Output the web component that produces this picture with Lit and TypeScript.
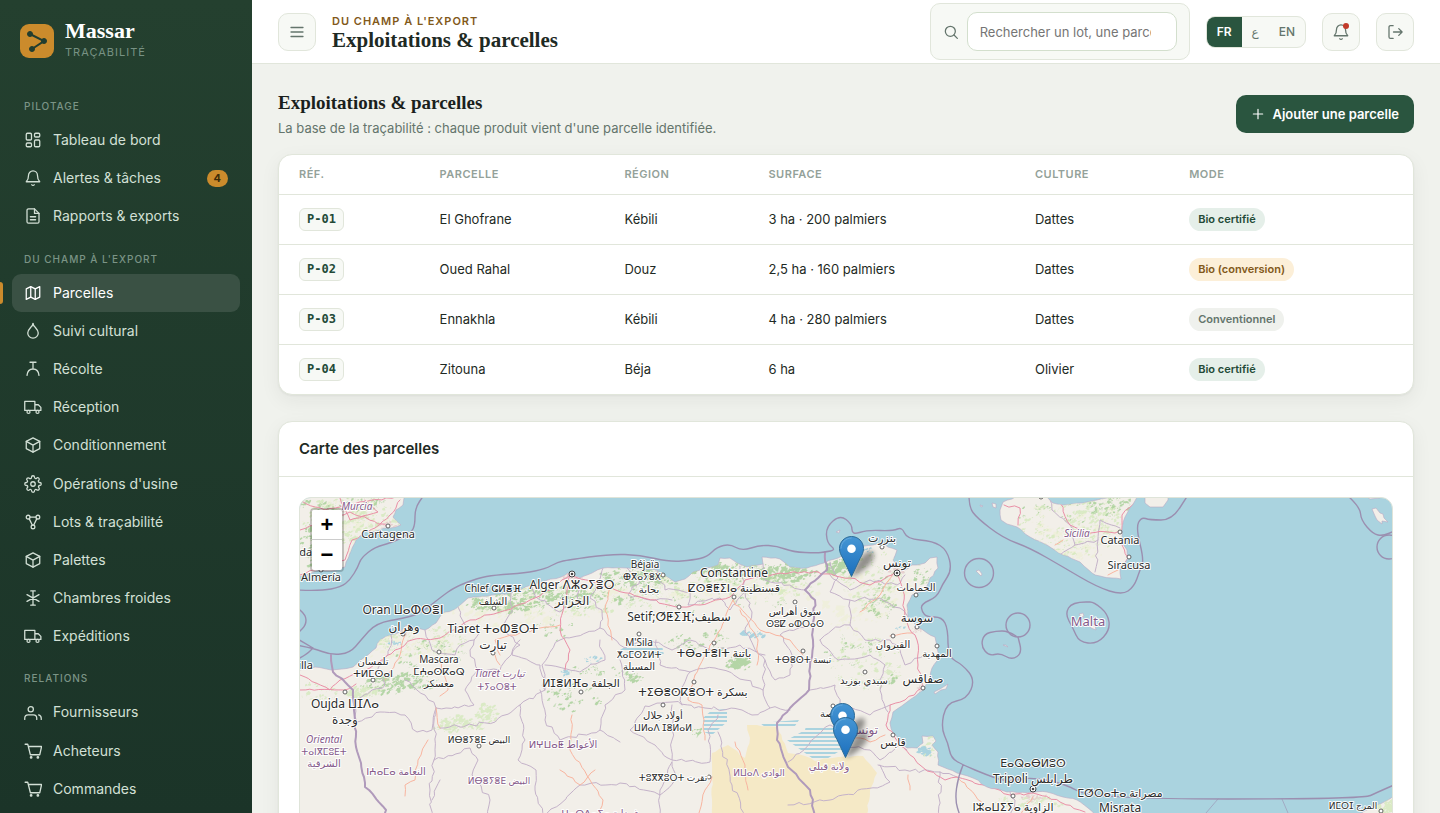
import { LitElement, html, css, svg } from "lit";
import { customElement, property, state } from "lit/decorators.js";
import { classMap } from "lit/directives/class-map.js";

const icons: Record<string, unknown> = {
  dashboard: svg`<rect x="3" y="3" width="7" height="9" rx="1.5"/><rect x="14" y="3" width="7" height="5" rx="1.5"/><rect x="14" y="12" width="7" height="9" rx="1.5"/><rect x="3" y="16" width="7" height="5" rx="1.5"/>`,
  bell: svg`<path d="M6 8.5a6 6 0 0 1 12 0c0 6 2.500 7.500 3 8.500H3c.5-1 3-2.500 3-8.500"/><path d="M10.300 21a2 2 0 0 0 3.400 0"/>`,
  file: svg`<path d="M14 2.500H6a2 2 0 0 0-2 2v15a2 2 0 0 0 2 2h12a2 2 0 0 0 2-2v-11z"/><path d="M14 2.500v6h6M8.500 13h7M8.500 17h7"/>`,
  map: svg`<path d="M3 6.500l6-3 6 3 6-3v14l-6 3-6-3-6 3z"/><path d="M9 3.500v14M15 6.500v14"/>`,
  drop: svg`<path d="M12 2.500c1 4 7 7 7 12a7 7 0 0 1-14 0c0-5 6-8 7-12z"/><path d="M12 2v3"/>`,
  harvest: svg`<path d="M8 3h8M12 3v9M4 20.500c.5-5 3.500-8.500 8-8.500s7.500 3.500 8 8.500"/>`,
  truck: svg`<path d="M1 4.500h13.500v12H1zM14.500 9h4.500l3.500 3.500v4h-8"/><circle cx="6" cy="18.500" r="2"/><circle cx="18" cy="18.500" r="2"/>`,
  box: svg`<path d="M12 2.500l9 4.700v9.600l-9 4.700-9-4.700V7.200z"/><path d="M3 7.200l9 5 9-5M12 12.200v9.300"/>`,
  gear: svg`<circle cx="12" cy="12" r="3"/><path d="M19.400 15a1.650 1.650 0 0 0 .33 1.820l.06.06a2 2 0 1 1-2.830 2.830l-.06-.06a1.650 1.650 0 0 0-2.800 1.180V21a2 2 0 1 1-4 0v-.09a1.650 1.650 0 0 0-2.820-1.170l-.06.06a2 2 0 1 1-2.830-2.830l.06-.06A1.650 1.650 0 0 0 3.170 14H3a2 2 0 1 1 0-4h.09a1.650 1.650 0 0 0 1.170-2.820l-.06-.06a2 2 0 1 1 2.830-2.830l.06.06A1.650 1.650 0 0 0 10 3.170V3a2 2 0 1 1 4 0v.09a1.650 1.650 0 0 0 2.820 1.170l.06-.06a2 2 0 1 1 2.830 2.830l-.06.06A1.650 1.650 0 0 0 20.910 10H21a2 2 0 1 1 0 4h-.09a1.650 1.650 0 0 0-1.510 1z"/>`,
  lots: svg`<circle cx="5.500" cy="5.500" r="2.500"/><circle cx="18.500" cy="5.500" r="2.500"/><circle cx="12" cy="18.500" r="2.500"/><path d="M8 5.500h8M7 7.800l4 8.300M17 7.800l-4 8.300"/>`,
  snow: svg`<path d="M12 2.500v19M4 7.500l16 9M20 7.500l-16 9M9 2.500h6M9 21.500h6"/>`,
  users: svg`<circle cx="9" cy="7" r="3.500"/><path d="M1 20.500v-1.500c0-3 2-4.500 4.500-4.500h7c2.500 0 4.500 1.500 4.500 4.500v1.500M19.500 14.500c2.200.6 3.500 2 3.500 4.500v1.500"/>`,
  cart: svg`<path d="M1.500 3H5l3.500 14h12.500l2.500-11H6"/><circle cx="9.500" cy="20.500" r="1"/><circle cx="18.500" cy="20.500" r="1"/>`,
  menu: svg`<path d="M4 6h16M4 12h16M4 18h16"/>`,
  search: svg`<circle cx="11" cy="11" r="7.500"/><path d="M16.500 16.500l5 5"/>`,
  logout: svg`<path d="M9.500 3.500H6a2 2 0 0 0-2 2v13a2 2 0 0 0 2 2h3.500M10 12h11.500M17 7.500l4.500 4.500-4.500 4.500"/>`,
  plus: svg`<path d="M12 4v16M4 12h16"/>`,
};

const icon = (name: string, cls = "icon") =>
  html`<svg class=${cls} viewBox="0 0 24 24" aria-hidden="true">${icons[name]}</svg>`;

@customElement("massar-sidebar")
class MassarSidebar extends LitElement {
  @property() current = "Parcelles";

  private groups = [
    { title: "PILOTAGE", items: [["dashboard", "Tableau de bord"], ["bell", "Alertes & tâches", "4"], ["file", "Rapports & exports"]] },
    {
      title: "DU CHAMP À L'EXPORT",
      items: [["map", "Parcelles"], ["drop", "Suivi cultural"], ["harvest", "Récolte"], ["truck", "Réception"], ["box", "Conditionnement"],
        ["gear", "Opérations d'usine"], ["lots", "Lots & traçabilité"], ["box", "Palettes"], ["snow", "Chambres froides"], ["truck", "Expéditions"]],
    },
    { title: "RELATIONS", items: [["users", "Fournisseurs"], ["cart", "Acheteurs"], ["cart", "Commandes"]] },
  ];

  static styles = css`
    :host { display: block; padding: 18px 12px 0; overflow: hidden; color: #d3e0d6;
      background: linear-gradient(#24402f, #1b3428); font-family: Inter, sans-serif; }
    .brand { display: flex; align-items: center; gap: 11px; padding: 0 8px; height: 46px; margin-bottom: 19px; }
    .logo { width: 34px; height: 34px; flex: none; }
    .name { font: bold 22px/24px "Liberation Serif", serif; color: #fff; }
    .tag { padding-bottom: 3px; font-size: 11px; line-height: 18px; letter-spacing: 1px; color: #789284; }
    .title { margin: 0; padding: 16px 12px 8px; font-size: 10px; line-height: 14px; font-weight: 500; letter-spacing: 1px; color: #7b9486; }
    .item { position: relative; display: flex; align-items: center; gap: 11px; padding: 10px 12px; border-radius: 9px;
      color: inherit; text-decoration: none; font-size: 14px; line-height: 1.3; }
    .item.on { background: #3a5144; color: #fff; }
    .item.on::before { content: ""; position: absolute; left: -12px; top: 8px; bottom: 8px; width: 3px; border-radius: 0 3px 3px 0; background: #cb8b2c; }
    .icon { width: 18px; height: 18px; flex: none; fill: none; stroke: currentColor; stroke-width: 1.7; stroke-linecap: round; stroke-linejoin: round; }
    .count { margin-left: auto; padding: 0 7px; border-radius: 9px; background: #cb8b2c; color: #3c2a08; font-size: 11px; line-height: 17px; font-weight: 700; }
  `;

  render() {
    return html`
      <div class="brand">
        <svg class="logo" viewBox="0 0 34 34" aria-hidden="true">
          <rect width="34" height="34" rx="9" fill="#cb8b2c"/>
          <g fill="#223d2f" stroke="#223d2f"><path d="M10 10l14 7-12 8" fill="none" stroke-width="2"/>
          <circle cx="10" cy="10" r="2.500"/><circle cx="24" cy="17" r="2.500"/><circle cx="12" cy="25" r="2.500"/></g>
        </svg>
        <div><div class="name">Massar</div><div class="tag">TRAÇABILITÉ</div></div>
      </div>
      <nav>
        ${this.groups.map((g) => html`
          <h2 class="title">${g.title}</h2>
          ${g.items.map(([ic, label, count]) => html`
            <a href="#" class=${classMap({ item: true, on: label === this.current })}>
              ${icon(ic)}<span>${label}</span>${count ? html`<span class="count">${count}</span>` : ""}
            </a>`)}`)}
      </nav>`;
  }
}

type Pt = [number, number];

/* Small deterministic generator, so that the map texture is stable between renders. */
const random = (seed: number) => () => {
  seed = (seed * 1664525 + 1013904223) % 4294967296;
  return seed / 4294967296;
};

const parse = (s: string): Pt[] => s.trim().split(/\s+/).map((p) => p.split(",").map(Number) as Pt);

/* Breaks every segment of a line into short, slightly displaced steps. */
const rough = (s: string, amount = 2, seed = 7): string => {
  const pts = parse(s);
  const rnd = random(seed + pts[0][0] * 31);
  let d = `M${pts[0]}`;
  for (let i = 1; i < pts.length; i++) {
    const [ax, ay] = pts[i - 1];
    const [bx, by] = pts[i];
    const steps = Math.max(1, Math.round(Math.hypot(bx - ax, by - ay) / 5));
    for (let k = 1; k <= steps; k++) {
      const t = k / steps;
      const a = k === steps ? 0 : amount;
      d += `L${(ax + (bx - ax) * t + (rnd() - 0.5) * a * 2).toFixed(1)} ${(ay + (by - ay) * t + (rnd() - 0.5) * a * 2).toFixed(1)}`;
    }
  }
  return d;
};

/* Rounded line through the points. */
const smooth = (s: string, close = false): string => {
  const p = parse(s);
  let d = `M${p[0]}`;
  for (let i = 1; i < p.length - 1; i++) {
    d += `Q${p[i]} ${(p[i][0] + p[i + 1][0]) / 2},${(p[i][1] + p[i + 1][1]) / 2}`;
  }
  return d + `L${p[p.length - 1]}` + (close ? "Z" : "");
};

/* Ragged patches gathered in small clusters over an ellipse: cx, cy, rx, ry, clusters, size. */
const patches = (areas: number[][], seed: number, grain = 1): string => {
  const rnd = random(seed);
  let d = "";
  for (const [cx, cy, rx, ry, n, size] of areas) {
    for (let i = 0; i < n; i++) {
      const a = rnd() * 6.283;
      const r = Math.sqrt(rnd());
      const x = cx + Math.cos(a) * r * rx;
      const y = cy + Math.sin(a) * r * ry;
      for (let j = 0; j < 4; j++) {
        const s = size * grain * (0.15 + rnd() * rnd());
        const px = x + (rnd() - 0.5) * size * 3.5;
        const py = y + (rnd() - 0.5) * size * 2;
        for (let k = 0; k < 6; k++) {
          const b = (k / 6) * 6.283;
          const q = s * (0.3 + rnd());
          d += `${k ? "L" : "M"}${(px + Math.cos(b) * q * 1.3).toFixed(1)} ${(py + Math.sin(b) * q * 0.9 - Math.cos(b) * q * 0.4).toFixed(1)}`;
        }
        d += "Z";
      }
    }
  }
  return d;
};

const AFRICA = rough("296,671 315,667 331,670 353,667 365,657 376,648 380,640 391,635 400,632 406,625 411,628 425,630 436,623 441,615 458,607 468,598 478,597 511,593 531,585 561,577 568,573 580,578 587,575 603,568 627,568 657,570 667,577 675,582 685,579 693,572 707,568 718,565 720,558 730,558 742,565 747,567 763,564 762,557 780,559 790,567 807,568 820,564 838,558 860,547 873,545 880,543 897,550 893,560 900,568 905,570 912,565 925,563 930,558 937,557 938,568 930,578 925,590 912,595 907,605 908,617 917,627 927,633 935,637 937,647 940,657 932,668 930,677 923,690 907,702 893,712 890,723 893,733 902,742 907,748 917,748 923,743 922,736 933,736 936,741 932,745 938,752 938,765 957,773 973,778 987,787 1007,792 1033,792 1047,792 1063,797 1077,800 1088,808 1096,816", 0.7) + "L1100 930L290 930Z";
const SPAIN = rough("296,490 404,490 403,505 396,510 393,517 401,525 388,528 365,532 356,540 350,553 345,567 331,571 320,570 311,573 296,578", 0.8) + "Z";
const SICILY = rough("1003,502 1012,499 1020,494 1044,494 1053,503 1063,505 1083,503 1107,498 1112,492 1140,492 1125,517 1122,530 1122,543 1127,550 1128,558 1120,568 1121,579 1112,578 1100,576 1092,573 1080,562 1063,555 1047,545 1030,537 1017,527 1007,524 1001,520 1000,510", 0.6) + "Z";
const ISLES = "M1145 490L1145 503L1150 507L1163 507L1168 500L1168 490ZM1372 509L1376 508L1380 513L1383 514L1384 518L1388 522L1382 521L1382 524L1377 520L1375 516ZM1362 494h18v4l-10 1zM976 571l3-1 3 4-1 2zM1079 614l4-1 1 3-3 1zM1087 622l8 3 1 5-5-2zM934 692l6-3 8-5-2 5-5 1-6 4zM1003 645l3 0 2 2zM836 532l4-2-1 3zM980 505l3 1-2 1zM992 503l4 1 0 4-3-1z" + rough("1396,796 1380,804 1363,812 1355,818 1355,830 1396,830", 0.5);
const LAND = AFRICA + SPAIN + SICILY + ISLES;

const GREEN = patches([
  [345, 503, 48, 8, 30, 2], [315, 545, 18, 22, 34, 2.5], [505, 605, 45, 6, 50, 2.5], [545, 592, 50, 8, 70, 2.5], [640, 578, 42, 9, 70, 2.5],
  [728, 573, 38, 9, 50, 2.5], [785, 573, 30, 8, 60, 3], [838, 567, 9, 7, 26, 3], [400, 684, 36, 9, 65, 2.5], [430, 655, 38, 14, 30, 1.5],
  [590, 598, 50, 12, 35, 2], [700, 642, 35, 12, 28, 2], [738, 662, 8, 5, 18, 3.5], [572, 698, 28, 14, 28, 2], [880, 608, 14, 9, 20, 2],
  [850, 650, 25, 15, 20, 1.5], [923, 572, 7, 12, 14, 2], [595, 670, 22, 5, 16, 1.5], [1110, 505, 22, 12, 35, 2], [1060, 513, 45, 10, 18, 1.2],
  [630, 675, 12, 6, 12, 2.5], [720, 600, 90, 12, 26, 1.5], [883, 592, 8, 16, 14, 1.6], [550, 630, 30, 12, 14, 1.5], [893, 680, 4, 3, 5, 2.5], [697, 732, 3, 3, 5, 2.5],
], 11);
const MEADOW = patches([
  [350, 520, 48, 22, 90, 2.5], [460, 725, 24, 7, 50, 2.5], [487, 714, 9, 9, 26, 2.5], [365, 692, 16, 6, 30, 2.5], [420, 640, 45, 16, 60, 2],
  [560, 600, 110, 16, 110, 2], [730, 588, 90, 14, 90, 2], [870, 580, 35, 28, 70, 2], [865, 665, 35, 28, 70, 2], [1065, 530, 55, 28, 90, 2],
  [1095, 520, 25, 20, 40, 2.5], [930, 750, 10, 12, 12, 2], [1030, 802, 40, 5, 36, 2], [1385, 807, 12, 8, 20, 3], [320, 690, 20, 10, 16, 2],
], 29);
const PALE = patches([[380, 650, 70, 14, 40, 4], [520, 612, 90, 12, 40, 4], [700, 590, 120, 14, 50, 4], [870, 600, 45, 50, 40, 4], [1075, 530, 50, 30, 40, 4], [350, 530, 45, 30, 40, 4]], 41);
const PONDS = patches([[745, 631, 6, 3, 3, 2.5], [757, 634, 3, 3, 3, 3.5], [595, 660, 9, 4, 5, 2], [565, 675, 6, 3, 3, 2.5], [395, 642, 9, 3, 6, 2], [870, 551, 5, 2, 4, 2], [900, 627, 3, 2, 3, 2], [898, 556, 4, 3, 4, 1.5], [926, 751, 4, 3, 8, 3.5]], 3);
const TOWNS = patches([[572, 577, 9, 3, 12, 2], [897, 571, 5, 4, 10, 2], [1033, 797, 12, 3, 10, 2], [388, 525, 8, 3, 8, 2], [404, 632, 5, 4, 6, 2], [922, 688, 3, 2, 4, 2], [1090, 624, 3, 3, 4, 1.5], [917, 629, 3, 4, 6, 1.5], [340, 512, 5, 4, 6, 1.5]], 5);

const BORDERS = [
  "331,655 333,672 345,682 353,690 355,720 356,747 361,763 365,787 386,810 384,822",
  "825,552 827,570 818,578 805,590 815,600 813,623 813,640 810,667 809,690 790,708 777,723 777,740 788,767 810,790 815,816",
].map((s) => rough(s, 1)).join("");

const MARITIME = [
  "296,590 321,591 341,587 350,580 358,567 361,558 375,547 391,543 411,533 415,525 415,508 424,495",
  "296,645 313,648 331,655 350,653 361,640 376,623 405,618 421,613 441,597 455,587 478,578 495,575 525,573 545,569 558,562 568,560 610,554 640,555 670,562 693,560 707,557 717,547 730,544 742,551 760,545 777,546 793,552 817,553 825,552 836,550 827,543 826,527 840,515 852,524 852,535 867,530 893,531 902,527 907,539 933,541 947,550 952,570 942,585 937,597 921,604 922,612 927,617 942,617 948,629 948,657 963,665 975,680 967,699 946,703 941,728 948,743 951,758 963,765 987,775 1007,782 1030,777 1063,783 1093,799 1363,799 1378,792 1394,785",
  "963,765 958,777 955,800 960,816",
  "969,495 969,507 977,518 1003,538 1030,548 1063,567 1097,587 1122,595 1134,587 1140,570 1144,560 1136,528 1141,517 1150,520 1172,520 1188,495",
  "1348,496 1360,507 1361,520 1373,534 1383,536 1394,531",
  "300,610 306,615 306,625 299,632", "296,660 306,655 313,648", "296,638 313,648",
  "1016,636 1008,631 996,631 984,634 981,646 989,656 1000,653 1012,660 1022,653 1018,637",
].map((s) => smooth(s)).join("") + smooth("1086,602 1072,602 1065,614 1073,628 1079,642 1097,644 1110,630 1108,614 1094,602 1086,602", true);

const PROVINCES = [
  "391,635 388,655 378,668 385,685 372,690 356,700 357,722", "357,722 380,712 405,715 417,732 432,730 436,708",
  "425,630 432,650 455,655 460,645 474,640", "458,607 465,625 480,632 470,650 478,670 465,690 474,705 436,708 425,695 405,680",
  "511,593 512,612 500,628 520,645 512,655 540,665 545,690 520,705 495,722 440,728", "436,708 434,760 430,790 432,816",
  "434,760 470,748 478,760 472,775 490,800 488,816", "520,705 525,740 518,760 536,770 535,790 545,816", "545,690 542,665 560,640 600,628 602,610 590,598 603,568",
  "540,690 545,720 560,740 600,730 620,742", "600,628 625,648 650,640 672,650 690,640 712,650 740,645 765,655",
  "545,665 580,672 605,660 600,640", "580,578 578,600 560,612 540,600 531,585", "627,568 640,580 628,595 650,600 672,600",
  "657,570 665,590 690,592 688,605 720,598 730,610 745,592 740,566", "763,564 765,580 790,585 805,590",
  "745,592 752,612 745,632 765,660 763,690 770,708 752,715 742,710 705,708 672,702 645,706 630,730 655,745 672,760",
  "620,660 625,690 605,705 600,730", "765,660 775,680 790,675 792,655 780,635 813,623", "770,708 790,710", "672,705 672,760 710,762 708,730 718,715",
  "672,762 660,790 660,816", "672,762 675,780 660,795 620,783 580,785 545,816", "718,732 732,785 745,816", "690,672 680,690 682,705",
  "830,575 850,590 870,580 897,585 905,575", "830,562 838,578 830,592 850,600 850,625 832,630 820,640", "850,600 880,598 900,608 908,617",
  "850,625 865,640 890,640 900,650 905,665 925,655", "820,640 838,660 870,655 885,665 880,690 888,712", "810,690 835,685 840,705 870,715 890,705",
  "845,745 870,750 880,760 900,745 907,750", "788,762 830,725 850,735", "878,765 905,770 940,772 957,777", "940,772 940,816", "788,805 830,800 890,782 880,765",
  "1046,494 1052,510 1070,525 1075,545 1060,555", "1075,545 1098,540 1100,520 1120,528", "1098,540 1095,572", "1010,816 1015,800 1010,792",
  "440,780 432,800", "520,640 500,670 478,670", "656,640 660,665 690,672 715,668 745,680 763,690",
].map((s) => rough(s, 1.8)).join("");

const MOTORWAYS = [
  "300,675 330,690 340,680 370,668 395,650 412,640 440,638 470,620 500,612 530,600 550,590 570,575 600,585 640,597 680,607 700,605 730,597 745,580 780,573 818,572",
  "570,575 565,600 560,630 570,650 565,670", "296,500 325,510 345,505 372,500 402,497", "300,530 330,520 350,512 388,527", "340,498 350,520 378,512 365,500",
  "300,575 320,568 345,560 352,540 375,528 390,515 400,500", "818,572 850,578 870,585 892,575 897,570", "897,570 903,590 905,620 917,640 918,665 922,688 905,700 890,705 886,725 900,745 920,765 945,780 957,777 985,785",
  "985,785 1010,795 1033,793 1060,802 1085,812", "1004,505 1020,508 1018,525", "1060,503 1070,525 1085,532 1115,533 1122,530 1122,515 1138,500", "1122,545 1128,558 1122,565", "300,690 345,690 356,684",
].map((s) => rough(s, 1.2)).join("");

const ROADS = [
  "405,635 400,655 385,680", "440,660 448,690 440,696", "500,655 495,640 540,628 560,625", "610,586 605,610 612,640", "733,600 725,620 710,645 695,675",
  "695,675 688,700 702,705 705,740", "733,600 760,630 790,640 803,655", "428,740 418,760 415,780 405,785 405,796", "572,715 570,750 590,780 603,800 600,816",
  "735,742 745,765 748,790", "712,777 705,790 698,816", "740,610 758,640 757,665", "892,575 880,595 860,612", "890,636 912,633", "850,735 870,742 885,735",
  "957,777 975,795 985,810", "908,775 910,790", "1033,797 1020,816", "1055,545 1063,540", "1108,575 1118,570", "560,770 580,785 595,770", "436,708 440,728", "495,655 500,665",
].map((s) => rough(s, 1.2)).join("");

const SAND = rough("747,725 777,727 788,753 805,756 815,761 838,757 863,756 877,773 870,790 865,830 712,830 712,753 728,745 745,758 750,738 747,725", 0.8) + "Z";
const SALT = ["M787 740L805 730L806 726L838 726L838 752L825 760L812 758Z", "M703 718L712 710L727 709L727 722L712 735L704 732Z", "M620 650L628 645L662 646L664 655L640 657Z", "M760 723L799 720L795 726L765 727Z", "M838 742L850 742L846 750L838 750Z"].join("");

/* Place names: x, baseline, size, text, kind (c: city, r: region). */
const LABELS: [number, number, number, string, string][] = [
  [357, 510, 10, "Murcia", "ri"], [388, 538, 11, "Cartagena", "c"], [290, 556, 11, "Granada", "c"], [321, 581, 11, "Almería", "c"],
  [403, 614, 12, "Oran ⵡⴰⵀⵔⴻⵏ", "c"], [404, 631, 12, "وهران", "c"], [296, 669, 11, "Melilla", "c"],
  [373, 665, 10, "تلمسان", "c"], [373, 677, 10, "ⵜⵍⵎⵙⴰⵏ", "c"], [345, 708, 12, "Oujda ⵡⵊⴷⴰ", "c"], [345, 724, 12, "وجدة", "c"],
  [324, 743, 10, "Oriental", "ri"], [324, 755, 9, "ⵜⴰⵏⴳⵎⵓⴹⵜ", "r"], [324, 767, 10, "الشرقية", "r"],
  [493, 592, 10, "Chlef ⵛⵍⴻⴼ", "c"], [493, 605, 10, "الشلف", "c"], [493, 633, 12, "Tiaret ⵜⴰⵀⴻⵔⵜ", "c"], [493, 649, 12, "تيارت", "c"],
  [439, 663, 10, "Mascara", "c"], [439, 675, 10, "ⵎⵄⴰⵙⴽⴰⵕ", "c"], [439, 687, 10, "معسكر", "c"],
  [500, 677, 10, "Tiaret تيارت", "ri"], [497, 690, 9, "ⵜⵢⴰⵔⴻⵜ", "r"], [479, 743, 9, "ⵍⴱⴻⵢⴻⴹ البيض", "c"], [396, 775, 10, "ⵏⵄⴰⵎⴰ النعامة", "r"], [499, 784, 9, "ⵍⴱⴻⵢⴻⴹ البيض", "r"],
  [572, 589, 12, "Alger ⴷⵣⴰⵢⴻⵔ", "c"], [572, 605, 12, "الجزائر", "c"], [581, 687, 11, "ⵍⵊⴻⵍⴼⴰ الجلفة", "c"], [563, 748, 10, "ⵍⵖⵡⴰⵟ الأغواط", "r"],
  [645, 568, 10, "Béjaïa", "c"], [642, 580, 9, "ⴲⴳⴰⵢⴻⵝ", "c"], [649, 593, 10, "بجاية", "c"],
  [734, 577, 12, "Constantine", "c"], [734, 592, 11, "ⵇⵙⴻⵟⵉⵏⴰ قسنطينة", "c"], [679, 621, 12, "Setif;ⵚⵟⵉⴼ;سطيف", "c"],
  [639, 646, 10, "M'Sila", "c"], [639, 658, 9, "ⵅⴰⵎⵙⵉⵍⵜ", "c"], [639, 670, 10, "المسيلة", "c"], [714, 657, 11, "ⵜⴱⴰⵜⴻⵏⵜ باتنة", "c"],
  [693, 696, 11, "ⵜⵉⴱⴻⵙⴽⴻⵔⵜ بسكرة", "c"], [663, 719, 10, "أولاد جلال", "c"], [663, 731, 9, "ⵡⵍⴰⴷ ⵊⴻⵍⴰⵍ", "c"],
  [795, 615, 10, "سوق أهراس", "c"], [795, 627, 9, "ⵙⵓⵇ ⴰⵀⵔⴰⵙ", "c"], [803, 663, 9, "ⵜⴱⴻⵙⵜ تبسة", "c"], [673, 781, 9, "ⵜⵓⴳⴳⵓⵔⵜ تقرت", "c"],
  [759, 776, 9, "ⵍⵡⴰⴷ الوادي", "r"], [829, 770, 10, "ولاية قبلي", "r"], [832, 717, 10, "قفصة", "c"], [864, 734, 12, "تونس", "r"],
  [600, 817, 10, "ⵖⴰⵔⴷⴰⵢⴰ غرداية", "r"], [882, 542, 11, "بنزرت", "c"], [897, 567, 12, "تونس", "c"], [916, 591, 10, "الحمامات", "c"],
  [917, 622, 12, "سوسة", "c"], [893, 648, 10, "القيروان", "c"], [937, 657, 10, "المهدية", "c"], [864, 684, 10, "سيدي بوزيد", "c"],
  [923, 683, 12, "صفاقس", "c"], [893, 746, 11, "قابس", "c"], [1077, 537, 10, "Sicilia", "ri"], [1120, 544, 11, "Catania", "c"], [1129, 569, 11, "Siracusa", "c"],
  [1088, 626, 13, "Malta", "r"], [1033, 767, 11, "ⴹⴰⵕⴰⴱⵍⵓⵙ", "c"], [1033, 783, 12, "Tripoli طرابلس", "c"], [1013, 811, 11, "ⵏⵣⴰⵡⵉⵢⴰ الزاوية", "c"],
  [1120, 797, 11, "ⵎⵚⵔⴰⵜⴰ مصراتة", "c"], [1120, 812, 12, "Misrata", "c"], [1353, 809, 9, "ⵍⵎⵔⵊ المرج", "c"],
];

const CITIES: Pt[] = [[388, 526], [321, 570], [403, 634], [345, 692], [373, 680], [439, 652], [494, 608], [493, 653], [479, 746], [581, 692], [663, 575], [734, 597], [679, 607], [639, 634], [714, 643], [694, 682], [663, 705], [795, 602], [803, 651], [709, 777], [833, 706], [916, 595], [917, 627], [893, 636], [937, 646], [865, 672], [923, 688], [893, 735], [1120, 532], [1129, 557], [1013, 796], [1381, 811], [882, 547], [1041, 497]];
const CAPITALS: Pt[] = [[572, 574], [897, 573], [1033, 789]];
const PINS: Pt[] = [[851, 577], [842, 744], [845, 758]];

@customElement("parcel-map")
class ParcelMap extends LitElement {
  static styles = css`
    :host { display: block; position: relative; height: 420px; border: 1px solid #dfe4d9; border-radius: 12px; overflow: hidden; background: #aad3df; }
    .map { display: block; width: 100%; height: 100%; }
    .line { fill: none; stroke-linejoin: round; stroke-linecap: round; }
    .place { font-family: "Noto Sans", "DejaVu Sans", sans-serif; text-anchor: middle; paint-order: stroke; stroke: #fffffff0; stroke-width: 2px; stroke-linejoin: round; fill: #2c2c2c; }
    .r, .ri { fill: #855a8a; }
    .ri { font-style: italic; }
    .zoom { position: absolute; left: 10px; top: 10px; display: grid; border: 2px solid #0003; border-radius: 4px; background-clip: padding-box; }
    .zoom button { width: 30px; height: 30px; padding: 0; border: 0; background: #fff; color: #000; font: bold 22px/30px "Liberation Sans", sans-serif; }
    .zoom button:first-child { border-bottom: 1px solid #ccc; border-radius: 2px 2px 0 0; }
    .zoom button:last-child { border-radius: 0 0 2px 2px; }
  `;

  render() {
    return html`
      <svg class="map" viewBox="300 498 1092 420" preserveAspectRatio="xMidYMin slice" role="img" aria-label="Carte des parcelles">
        <defs>
          <clipPath id="land"><path d=${LAND}/></clipPath>
          <pattern id="salt" width="8" height="4" patternUnits="userSpaceOnUse"><rect width="8" height="2" fill="#aad3df"/></pattern>
          <linearGradient id="pin" x1="0" y1="0" x2="0" y2="1"><stop offset="0" stop-color="#4596d4"/><stop offset="1" stop-color="#1c6fbd"/></linearGradient>
          <filter id="soft" x="-40%" y="-40%" width="180%" height="180%"><feGaussianBlur stdDeviation="2.500"/></filter>
        </defs>
        <path d=${LAND} fill="#f2efe9" stroke="#b9a9c4" stroke-width="0.6"/>
        <g clip-path="url(#land)">
          <path d=${SAND} fill="#f5e9c6"/>
          <path d=${PALE} fill="#eef0d5" opacity="0.7"/>
          <path d=${MEADOW} fill="#d3e8bb" opacity="0.8"/>
          <path d=${GREEN} fill="#add19e" opacity="0.9"/>
          <path d=${TOWNS} fill="#e6cfcf"/>
          <path d=${PONDS} fill="#aad3df"/>
          <path d=${SALT} fill="url(#salt)"/>
          <path class="line" d=${PROVINCES} stroke="#c4b2c9"/>
          <path class="line" d=${ROADS} stroke="#f8b5a0"/>
          <path class="line" d=${MOTORWAYS} stroke="#e98fa6"/>
        </g>
        <path class="line" d="M1218 799L1206 813M1282 799L1288 813" stroke="#9b8fb0" stroke-width="0.6"/>
        <path class="line" d=${BORDERS} stroke="#b09abb" stroke-width="2"/>
        <g class="line" stroke="#9b8fb0" stroke-width="1.4">
          <path d=${MARITIME}/><circle cx="979" cy="573" r="14.500"/><circle cx="1018" cy="625" r="12"/><circle cx="1389" cy="547" r="12"/>
        </g>
        <g fill="#fff" stroke="#555" stroke-width="0.9">${CITIES.map(([x, y]) => svg`<circle cx=${x} cy=${y} r="2"/>`)}</g>
        ${CAPITALS.map(([x, y]) => svg`<circle cx=${x} cy=${y} r="3" fill="#fff" stroke="#444"/><circle cx=${x} cy=${y} r="1.300" fill="#444"/>`)}
        ${LABELS.map(([x, y, size, text, kind]) => svg`<text class="place ${kind}" x=${x} y=${y} font-size=${size}>${text}</text>`)}
        ${PINS.map(([x, y]) => svg`<path d="M${x} ${y}c4-12 10-24 19-26 6-1 5 8-1 14-6 6-12 10-18 12z" fill="#000" opacity="0.4" filter="url(#soft)"/>`)}
        ${PINS.map(([x, y]) => svg`<g transform="translate(${x - 12} ${y - 41})">
          <path d="M12.500.5C5.800.5.500 5.800.500 12.500c0 4 1.500 6.500 3.500 10L12.500 40.500 21 22.500c2-3.500 3.500-6 3.500-10C24.500 5.800 19.200.5 12.500.5z" fill="url(#pin)" stroke="#2e6c97"/>
          <path d="M12.500 2C6.700 2 2 6.700 2 12.500" fill="none" stroke="#7db8e2" stroke-opacity="0.6"/><circle cx="12.500" cy="12.800" r="4.300" fill="#fff"/></g>`)}
      </svg>
      <div class="zoom"><button aria-label="Zoom avant">+</button><button aria-label="Zoom arrière">−</button></div>`;
  }
}

@customElement("app-root")
class AppRoot extends LitElement {
  @state() private lang = "FR";

  private rows = [
    ["P-01", "El Ghofrane", "Kébili", "3 ha · 200 palmiers", "Dattes", "Bio certifié", "ok"],
    ["P-02", "Oued Rahal", "Douz", "2,5 ha · 160 palmiers", "Dattes", "Bio (conversion)", "warn"],
    ["P-03", "Ennakhla", "Kébili", "4 ha · 280 palmiers", "Dattes", "Conventionnel", "plain"],
    ["P-04", "Zitouna", "Béja", "6 ha", "Olivier", "Bio certifié", "ok"],
  ];

  static styles = css`
    :host { display: grid; grid-template-columns: 252px minmax(0, 1fr); height: 100vh; overflow: hidden;
      font-family: Inter, "DejaVu Sans", sans-serif; color: #1e2a24; background: #f0f2ed; }
    * { box-sizing: border-box; }
    button { font-family: inherit; margin: 0; }
    .page { display: flex; flex-direction: column; min-width: 0; min-height: 0; }
    .top { display: flex; align-items: center; gap: 16px; height: 64px; flex: none; padding: 0 26px; background: #fff; border-bottom: 1px solid #e1e6db; }
    .heading { margin-right: auto; }
    .crumb { font-size: 11px; line-height: 16px; font-weight: 600; letter-spacing: 1px; color: #82591a; }
    h1 { margin: 0; font: bold 21px/22px "Liberation Serif", serif; }
    .icon { width: 18px; height: 18px; fill: none; stroke: currentColor; stroke-width: 1.7; stroke-linecap: round; stroke-linejoin: round; }
    .small { width: 16px; height: 16px; flex: none; fill: none; stroke: currentColor; stroke-width: 1.9; stroke-linecap: round; }
    .plus { width: 14px; height: 14px; flex: none; fill: none; stroke: currentColor; stroke-width: 2; stroke-linecap: round; }
    .square { position: relative; display: grid; place-items: center; width: 38px; height: 38px; padding: 0; border: 1px solid #e1e6db; border-radius: 10px; background: #f7f9f5; color: #64756c; }
    .dot { position: absolute; top: 9px; right: 10px; width: 6px; height: 6px; border-radius: 50%; background: #c23b2a; }
    .search { display: flex; align-items: center; gap: 8px; width: 260px; padding: 8px 12px; border: 1px solid #e1e6db; border-radius: 10px; background: #f7f9f5; color: #64756c; }
    .search input { flex: 1; min-width: 0; height: 39px; padding: 0 12px; border: 1px solid #d3dfcd; border-radius: 10px; background: #fff; font: 13px Inter, sans-serif; }
    .search input::placeholder { color: #757575; }
    .langs { display: flex; height: 32px; border: 1px solid #e1e6db; border-radius: 9px; background: #f7f9f5; overflow: hidden; }
    .langs button { padding: 0 10px; border: 0; background: none; color: #64756c; font-size: 12px; font-weight: 500; }
    .langs .on { background: #2a553f; color: #fff; font-weight: 600; }
    main { display: flex; flex-direction: column; padding: 26px; overflow: auto; scrollbar-width: none; flex: 1; min-height: 0; }
    .intro { display: flex; align-items: center; justify-content: space-between; margin-bottom: 16px; }
    h2 { margin: 0 0 2px; font: bold 19px/26px "Liberation Serif", serif; color: #1a1f1c; }
    .lead { margin: 0; font-size: 13px; line-height: 20px; color: #64756c; }
    .add { display: flex; align-items: center; gap: 7px; height: 38px; padding: 0 15px; border: 0; border-radius: 10px; background: #2a553f; color: #fff; font-size: 13px; font-weight: 600; }
    .card { flex: none; border: 1px solid #e1e6db; border-radius: 14px; background: #fff; box-shadow: 0 1px 2px #1e2a240d, 0 6px 20px #1e2a240f; overflow: hidden; margin-bottom: 26px; }
    table { width: 100%; table-layout: fixed; border-collapse: collapse; }
    th { height: 39px; padding: 0 20px; border-bottom: 1px solid #e1e6db; text-align: left; font-size: 11px; font-weight: 600; letter-spacing: 0.5px; color: #93a199; }
    td { height: 50px; padding: 0 20px; font-size: 13px; line-height: 20px; white-space: nowrap; }
    tr + tr td { border-top: 1px solid #e1e6db; }
    .c1 { width: 12.4%; } .c2 { width: 16.3%; } .c3 { width: 12.7%; } .c4 { width: 23.5%; } .c5 { width: 13.6%; }
    .ref { display: inline-block; padding: 0 7px; border: 1px solid #e1e6db; border-radius: 6px; background: #f7f9f5; color: #234a37; font: bold 12px/21px "DejaVu Sans Mono", monospace; }
    .pill { display: inline-block; padding: 0 9px; border-radius: 12px; font-size: 11px; line-height: 23px; font-weight: 600; }
    .ok { background: #e5efe9; color: #234a37; }
    .warn { background: #fcefd8; color: #82591a; }
    .plain { background: #eff1ed; color: #64756c; }
    h3 { margin: 0; padding: 16px 20px; border-bottom: 1px solid #e1e6db; font-size: 15px; line-height: 22px; font-weight: 600; }
    .body { padding: 20px; }
  `;

  render() {
    return html`
      <massar-sidebar></massar-sidebar>
      <div class="page">
        <header class="top">
          <button class="square" aria-label="Menu">${icon("menu")}</button>
          <div class="heading"><div class="crumb">DU CHAMP À L'EXPORT</div><h1>Exploitations &amp; parcelles</h1></div>
          <label class="search">${icon("search", "small")}<input type="search" aria-label="Rechercher" placeholder="Rechercher un lot, une parcelle…"></label>
          <div class="langs">
            ${["FR", "ع", "EN"].map((l) => html`<button class=${classMap({ on: l === this.lang })} @click=${() => (this.lang = l)}>${l}</button>`)}
          </div>
          <button class="square" aria-label="Notifications">${icon("bell")}<span class="dot"></span></button>
          <button class="square" aria-label="Déconnexion">${icon("logout")}</button>
        </header>
        <main>
          <div class="intro">
            <div><h2>Exploitations &amp; parcelles</h2><p class="lead">La base de la traçabilité : chaque produit vient d'une parcelle identifiée.</p></div>
            <button class="add">${icon("plus", "plus")}Ajouter une parcelle</button>
          </div>
          <section class="card">
            <table>
              <thead><tr><th class="c1">RÉF.</th><th class="c2">PARCELLE</th><th class="c3">RÉGION</th><th class="c4">SURFACE</th><th class="c5">CULTURE</th><th>MODE</th></tr></thead>
              <tbody>
                ${this.rows.map((r) => html`<tr><td><span class="ref">${r[0]}</span></td><td>${r[1]}</td><td>${r[2]}</td><td>${r[3]}</td><td>${r[4]}</td><td><span class="pill ${r[6]}">${r[5]}</span></td></tr>`)}
              </tbody>
            </table>
          </section>
          <section class="card"><h3>Carte des parcelles</h3><div class="body"><parcel-map></parcel-map></div></section>
        </main>
      </div>`;
  }
}
